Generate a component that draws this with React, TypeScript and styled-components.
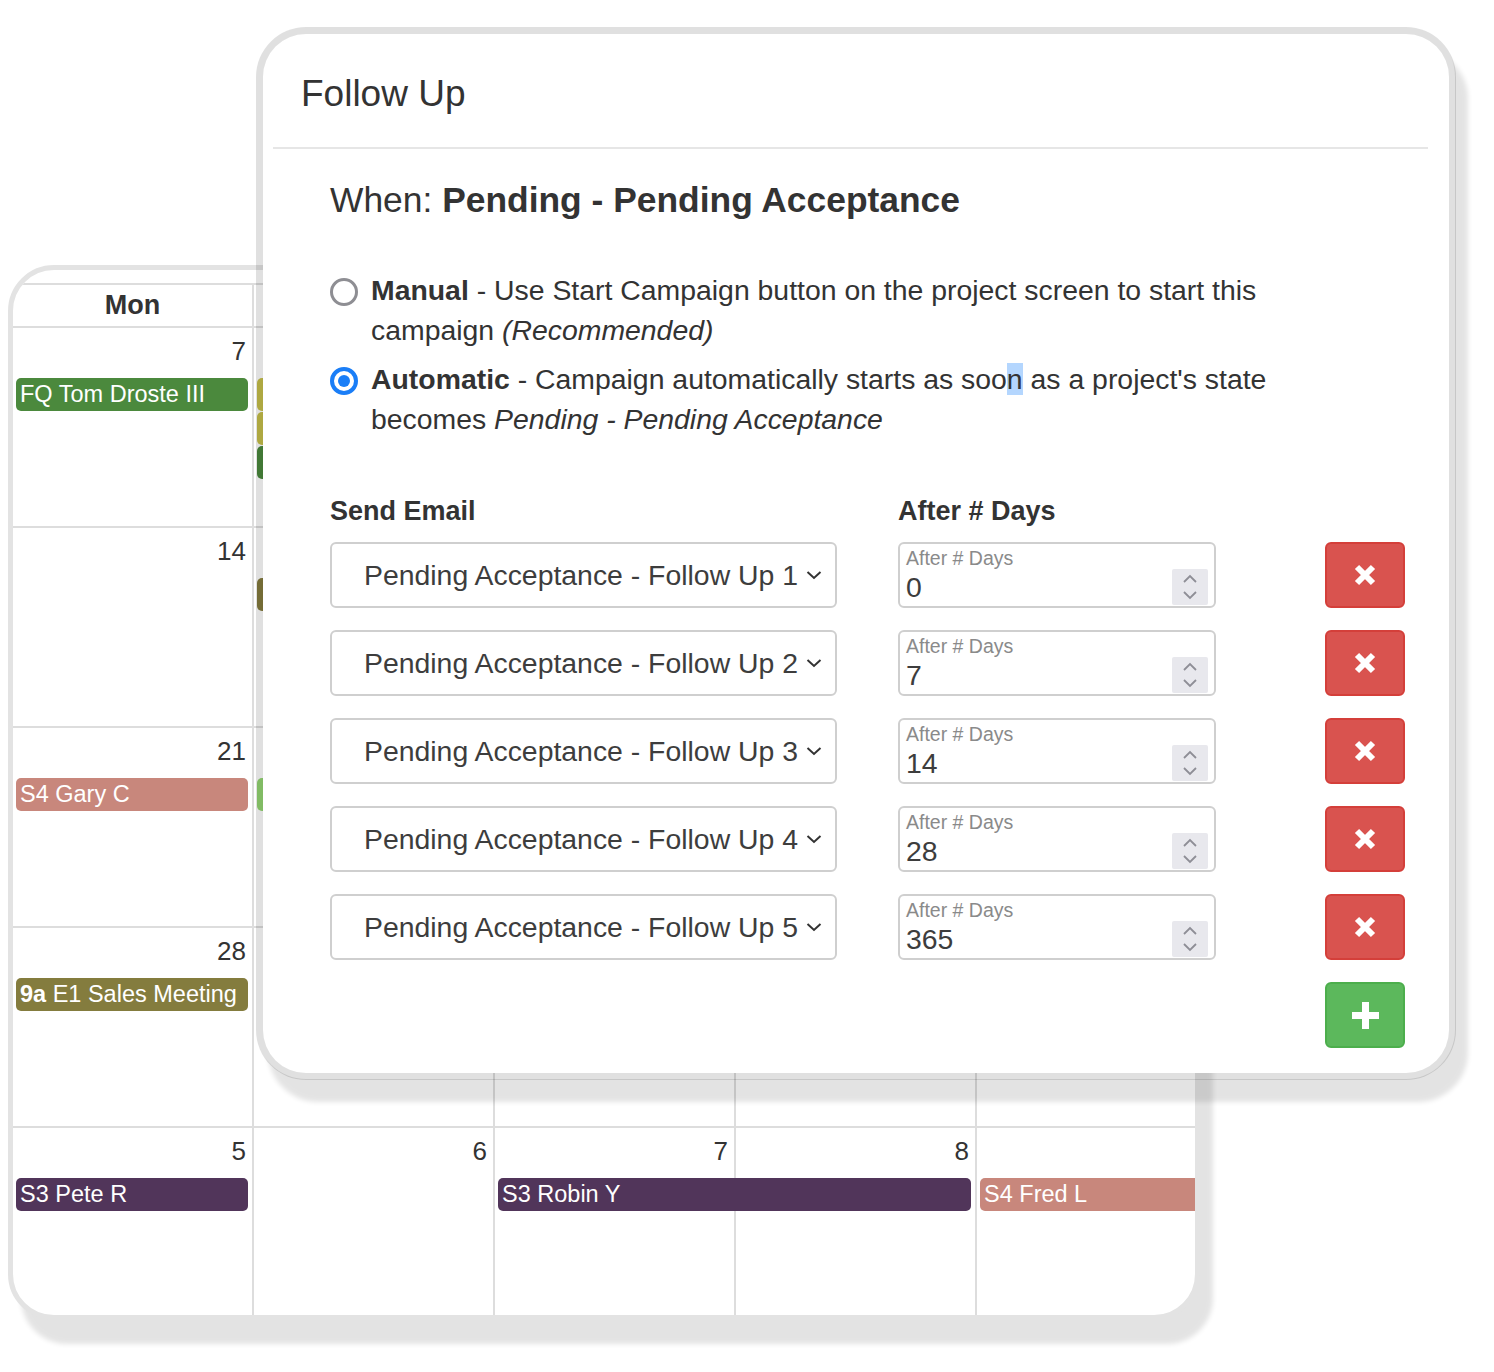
import React from "react";
import styled, { createGlobalStyle, css } from "styled-components";

const GlobalStyle = createGlobalStyle`
  html, body {
    margin: 0;
    padding: 0;
    background: #fff;
  }
  body {
    font-family: "Liberation Sans", Arial, Helvetica, sans-serif;
    color: #333;
  }
  * {
    box-sizing: border-box;
  }
`;

const Stage = styled.div`
  position: relative;
  width: 1494px;
  height: 1372px;
  overflow: hidden;
  padding: 265px 0 0 8px;
`;

/* ---------- calendar (behind) ---------- */

const CalendarCard = styled.div`
  width: 1192px;
  height: 1055px;
  padding-top: 13px;
  background: #fff;
  border: 5px solid #e3e3e3;
  border-radius: 46px;
  box-shadow: 13px 24px 5px rgba(0, 0, 0, 0.11);
  overflow: hidden;
`;

const HeadRow = styled.div`
  display: grid;
  grid-template-columns: repeat(5, 241px);
  height: 45px;
  border-top: 2px solid #ddd;
  border-bottom: 2px solid #ddd;
`;

const DayHead = styled.div`
  font-size: 27px;
  font-weight: 700;
  line-height: 41px;
  text-align: center;
  color: #333;
  border-right: 2px solid #ddd;
`;

const Week = styled.div`
  display: grid;
  grid-template-columns: repeat(5, 241px);
  grid-template-rows: 50px repeat(3, 34px) 1fr;
  height: 200px;
  border-bottom: 2px solid #ddd;
`;

const DayCell = styled.div<{ $col: number }>`
  grid-column: ${(p) => p.$col};
  grid-row: 1 / -1;
  padding: 8px 6px 0 0;
  font-size: 26px;
  line-height: 31px;
  text-align: right;
  color: #333;
  border-right: 2px solid #ddd;
`;

const Event = styled.div<{ $color: string; $col: number; $span?: number; $slot: number }>`
  grid-column: ${(p) => `${p.$col} / span ${p.$span ?? 1}`};
  grid-row: ${(p) => p.$slot + 1};
  height: 33px;
  margin: 0 6px 0 3px;
  padding-left: 4px;
  background: ${(p) => p.$color};
  border-radius: 5px;
  color: #fff;
  font-size: 23.5px;
  line-height: 33px;
  white-space: nowrap;
  overflow: hidden;

  b {
    font-weight: 700;
  }
`;

const GREEN = "#4b893d";
const SALMON = "#c8877c";
const OLIVE = "#847c3e";
const PURPLE = "#51355a";
const YELLOW = "#c7c04a";
const LIME = "#93d572";

interface ICalEvent {
  col: number;
  slot: number;
  span?: number;
  color: string;
  label?: React.ReactNode;
}

interface IWeek {
  // null = day covered by the dialog, number not drawn
  days: (number | null)[];
  events: ICalEvent[];
}

const weeks: IWeek[] = [
  {
    days: [7, null, null, null, null],
    events: [
      { col: 1, slot: 1, color: GREEN, label: "FQ Tom Droste III" },
      { col: 2, slot: 1, color: YELLOW },
      { col: 2, slot: 2, color: YELLOW },
      { col: 2, slot: 3, color: GREEN },
    ],
  },
  {
    days: [14, null, null, null, null],
    events: [{ col: 2, slot: 1, color: OLIVE }],
  },
  {
    days: [21, null, null, null, null],
    events: [
      { col: 1, slot: 1, color: SALMON, label: "S4 Gary C" },
      { col: 2, slot: 1, color: LIME },
    ],
  },
  {
    days: [28, null, null, null, null],
    events: [
      {
        col: 1,
        slot: 1,
        color: OLIVE,
        label: (
          <>
            <b>9a</b> E1 Sales Meeting
          </>
        ),
      },
    ],
  },
  {
    days: [5, 6, 7, 8, null],
    events: [
      { col: 1, slot: 1, color: PURPLE, label: "S3 Pete R" },
      { col: 3, slot: 1, span: 2, color: PURPLE, label: "S3 Robin Y" },
      { col: 5, slot: 1, color: SALMON, label: "S4 Fred L" },
    ],
  },
];

const dayNames = ["Mon", "", "", "", ""];

function Calendar() {
  return (
    <CalendarCard>
      <HeadRow>
        {dayNames.map((d, i) => (
          <DayHead key={i}>{d}</DayHead>
        ))}
      </HeadRow>
      {weeks.map((w, i) => (
        <Week key={i}>
          {w.days.map((d, j) => (
            <DayCell key={j} $col={j + 1}>
              {d}
            </DayCell>
          ))}
          {w.events.map((e, k) => (
            <Event key={k} $col={e.col} $slot={e.slot} $span={e.span} $color={e.color}>
              {e.label}
            </Event>
          ))}
        </Week>
      ))}
    </CalendarCard>
  );
}

/* ---------- follow up modal (front) ---------- */

const Modal = styled.section`
  position: absolute;
  left: 256px;
  top: 27px;
  z-index: 2;
  width: 1200px;
  height: 1053px;
  background: #fff;
  background-clip: padding-box;
  border: 7px solid rgba(0, 0, 0, 0.12);
  border-radius: 50px;
  box-shadow: 12px 22px 5px rgba(0, 0, 0, 0.11);
`;

const ModalHeader = styled.header`
  margin: 0 21px 0 10px;
  padding: 38px 0 31px 28px;
  border-bottom: 2px solid #e6e6e6;
`;

const Title = styled.h2`
  margin: 0;
  font-size: 37px;
  font-weight: 400;
  line-height: 44px;
  color: #333;
`;

const ModalBody = styled.div`
  padding: 30px 44px 0 67px;
`;

const When = styled.h3`
  margin: 0 0 49px;
  font-size: 35.4px;
  font-weight: 400;
  line-height: 42px;
  color: #333;

  b {
    font-weight: 700;
  }
`;

const Option = styled.label`
  display: flex;
  align-items: flex-start;
  gap: 13px;
  margin-bottom: 9px;
  font-size: 28.4px;
  line-height: 40px;
  color: #333;
`;

const Radio = styled.span<{ $checked?: boolean }>`
  flex: none;
  display: flex;
  align-items: center;
  justify-content: center;
  width: 28px;
  height: 28px;
  margin-top: 8px;
  border-radius: 50%;
  border: ${(p) => (p.$checked ? "4px solid #1a7ef7" : "3px solid #8e8e93")};

  &::after {
    content: "";
    width: 12px;
    height: 12px;
    border-radius: 50%;
    background: ${(p) => (p.$checked ? "#1a7ef7" : "transparent")};
  }
`;

const OptionText = styled.span`
  max-width: 960px;

  b {
    font-weight: 700;
  }
`;

const Selected = styled.span`
  background: #b4d6fe;
`;

const gridCols = css`
  display: grid;
  grid-template-columns: 507px 318px 1fr;
  column-gap: 61px;
`;

const ColumnHeads = styled.div`
  ${gridCols};
  margin-top: 56px;
  margin-bottom: 15px;
`;

const ColHeading = styled.div`
  font-size: 27px;
  font-weight: 700;
  line-height: 32px;
  color: #333;
`;

const StepsGrid = styled.div`
  ${gridCols};
  grid-auto-rows: 66px;
  row-gap: 22px;
`;

const SelectBox = styled.div`
  display: flex;
  align-items: center;
  justify-content: space-between;
  padding: 0 13px 0 32px;
  background: #fff;
  border: 2px solid #cfcfcf;
  border-radius: 6px;
  font-size: 28.4px;
  color: #3d3d3d;
  white-space: nowrap;
`;

const NumberField = styled.div`
  display: flex;
  padding: 3px 6px 0 6px;
  background: #fff;
  border: 2px solid #cfcfcf;
  border-radius: 6px;
`;

const FieldText = styled.div`
  display: flex;
  flex-direction: column;
`;

const FieldLabel = styled.span`
  font-size: 19.5px;
  line-height: 22px;
  color: #8a8a8a;
`;

const FieldValue = styled.span`
  margin-top: 2px;
  font-size: 28.4px;
  line-height: 32px;
  color: #3d3d3d;
`;

const Spinner = styled.div`
  align-self: flex-end;
  width: 36px;
  height: 36px;
  margin: 0 0 1px auto;
  background: #e8e8ed;
  border-radius: 2px;

  svg {
    display: block;
  }
`;

const IconButton = styled.button<{ $variant: "danger" | "success" }>`
  grid-column: 3;
  justify-self: end;
  display: flex;
  align-items: center;
  justify-content: center;
  width: 80px;
  height: 66px;
  padding: 0;
  border-radius: 6px;
  cursor: pointer;
  background: ${(p) => (p.$variant === "danger" ? "#d9534f" : "#5cb85c")};
  border: 2px solid ${(p) => (p.$variant === "danger" ? "#d43f3a" : "#4cae4c")};
`;

function Chevron() {
  return (
    <svg width="16" height="10" viewBox="0 0 16 10">
      <path d="M1.5 2 L8 8 L14.5 2" stroke="#333" strokeWidth="2" fill="none" />
    </svg>
  );
}

function SpinArrows() {
  return (
    <svg width="36" height="36" viewBox="0 0 36 36">
      <path
        d="M12 13 L18 7 L24 13 M12 23 L18 29 L24 23"
        stroke="#8e8e96"
        strokeWidth="1.8"
        fill="none"
      />
    </svg>
  );
}

function RemoveIcon() {
  return (
    <svg width="24" height="24" viewBox="0 0 24 24">
      <path d="M4 4 L20 20 M20 4 L4 20" stroke="#fff" strokeWidth="6" />
    </svg>
  );
}

function PlusIcon() {
  return (
    <svg width="27" height="27" viewBox="0 0 27 27">
      <path d="M13.5 0 V27 M0 13.5 H27" stroke="#fff" strokeWidth="7" />
    </svg>
  );
}

const steps = [
  { email: "Pending Acceptance - Follow Up 1", days: 0 },
  { email: "Pending Acceptance - Follow Up 2", days: 7 },
  { email: "Pending Acceptance - Follow Up 3", days: 14 },
  { email: "Pending Acceptance - Follow Up 4", days: 28 },
  { email: "Pending Acceptance - Follow Up 5", days: 365 },
];

function FollowUp() {
  return (
    <Modal>
      <ModalHeader>
        <Title>Follow Up</Title>
      </ModalHeader>
      <ModalBody>
        <When>
          When: <b>Pending - Pending Acceptance</b>
        </When>

        <Option>
          <Radio />
          <OptionText>
            <b>Manual</b> - Use Start Campaign button on the project screen to start this campaign{" "}
            <i>(Recommended)</i>
          </OptionText>
        </Option>
        <Option>
          <Radio $checked />
          <OptionText>
            <b>Automatic</b> - Campaign automatically starts as soo<Selected>n</Selected> as a
            project's state becomes <i>Pending - Pending Acceptance</i>
          </OptionText>
        </Option>

        <ColumnHeads>
          <ColHeading>Send Email</ColHeading>
          <ColHeading>After # Days</ColHeading>
        </ColumnHeads>

        <StepsGrid>
          {steps.map((s) => (
            <React.Fragment key={s.email}>
              <SelectBox>
                {s.email}
                <Chevron />
              </SelectBox>
              <NumberField>
                <FieldText>
                  <FieldLabel>After # Days</FieldLabel>
                  <FieldValue>{s.days}</FieldValue>
                </FieldText>
                <Spinner>
                  <SpinArrows />
                </Spinner>
              </NumberField>
              <IconButton $variant="danger" aria-label="Remove">
                <RemoveIcon />
              </IconButton>
            </React.Fragment>
          ))}
          <IconButton $variant="success" aria-label="Add">
            <PlusIcon />
          </IconButton>
        </StepsGrid>
      </ModalBody>
    </Modal>
  );
}

export default function App() {
  return (
    <>
      <GlobalStyle />
      <Stage>
        <Calendar />
        <FollowUp />
      </Stage>
    </>
  );
}
